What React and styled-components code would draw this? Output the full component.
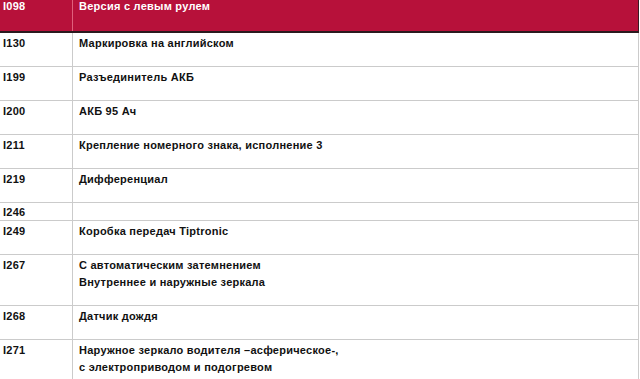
import React from 'react';
import styled, { createGlobalStyle } from 'styled-components';

const GlobalStyle = createGlobalStyle`
  html, body {
    margin: 0;
    padding: 0;
    background: #ffffff;
  }
  body {
    font-family: "Liberation Sans", Arial, sans-serif;
  }
`;

const Sheet = styled.div`
  width: 639px;
  font-size: 11px;
  font-weight: bold;
  letter-spacing: 0.25px;
  color: #111;
`;

const HeadRow = styled.div`
  display: grid;
  grid-template-columns: 72px 1fr;
  height: 31px;
  background: #b7113a;
  color: #ffffff;
  line-height: 13px;
  border-bottom: 2px solid #2a1a1e;
  border-right: 1px solid #3a1a22;
`;

const HeadCell = styled.div`
  padding: ${(p) => (p.$wide ? '0 0 0 6px' : '0 0 0 3px')};
  border-left: ${(p) => (p.$wide ? '1px solid #e0607c' : 'none')};
`;

const Row = styled.div`
  display: grid;
  grid-template-columns: 72px 1fr;
  line-height: ${(p) => (p.$compact ? '16px' : '17px')};
  border-bottom: 1px solid #cbcbcb;
  border-right: 1px solid #cbcbcb;
`;

const Code = styled.div`
  padding: ${(p) => (p.$compact ? '1px 0 0 3px' : '2px 0 14px 3px')};
`;

const Desc = styled.div`
  padding: ${(p) => (p.$compact ? '1px 0 0 6px' : '2px 0 14px 6px')};
  border-left: 1px solid #cbcbcb;
`;

const rows = [
  { code: 'I130', lines: ['Маркировка на английском'] },
  { code: 'I199', lines: ['Разъединитель АКБ'] },
  { code: 'I200', lines: ['АКБ 95 Ач'] },
  { code: 'I211', lines: ['Крепление номерного знака, исполнение 3'] },
  { code: 'I219', lines: ['Дифференциал'] },
  { code: 'I246', lines: [] },
  { code: 'I249', lines: ['Коробка передач Tiptronic'] },
  { code: 'I267', lines: ['С автоматическим затемнением', 'Внутреннее и наружные зеркала'] },
  { code: 'I268', lines: ['Датчик дождя'] },
  { code: 'I271', lines: ['Наружное зеркало водителя –асферическое-,', 'с электроприводом и подогревом'] },
];

const App = () => {
  return (
    <>
      <GlobalStyle />
      <Sheet>
        <HeadRow>
          <HeadCell>I098</HeadCell>
          <HeadCell $wide>Версия с левым рулем</HeadCell>
        </HeadRow>
        {rows.map((r) => {
          const compact = r.lines.length === 0;
          return (
            <Row key={r.code} $compact={compact}>
              <Code $compact={compact}>{r.code}</Code>
              <Desc $compact={compact}>
                {r.lines.map((l) => (
                  <div key={l}>{l}</div>
                ))}
              </Desc>
            </Row>
          );
        })}
      </Sheet>
    </>
  );
};

export default App;
